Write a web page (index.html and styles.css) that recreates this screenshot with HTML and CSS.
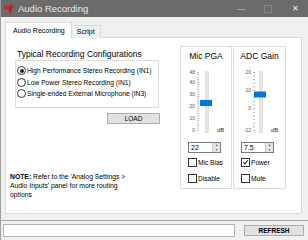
FILE: index.html
```html
<!DOCTYPE html>
<html lang="en">
<head>
    <meta charset="UTF-8">
    <link rel="stylesheet" href="styles.css">
    <title>Audio Recording</title>
</head>
<body>
    <div class="window">
        <div class="titlebar">
            <svg class="logo" width="10" height="10" viewBox="0 0 10 10">
                <path d="M0 2 L3 1 L4 3 L5 2 L6 0 L8 1 L10 3 L8 4 L8 7 L6 10 L5 9 L5 6 L3 5 L1 5 Z" fill="#c8202a"/>
            </svg>
            <span class="title">Audio Recording</span>
            <div class="controls">
                <span class="ctl min">&#8212;</span>
                <span class="ctl max"></span>
                <span class="ctl close">&#10005;</span>
            </div>
        </div>

        <div class="content">
            <div class="tabs">
                <div class="tab active">Audio Recording</div>
                <div class="tab">Script</div>
            </div>
            <div class="panel">
                <div class="left-col">
                    <div class="section-title">Typical Recording Configurations</div>
                    <div class="config-list">
                        <label class="radio-row"><span class="radio checked"></span>High Performance Stereo Recording (IN1)</label>
                        <label class="radio-row"><span class="radio"></span>Low Power Stereo Recording (IN1)</label>
                        <label class="radio-row"><span class="radio"></span>Single-ended External Microphone (IN3)</label>
                    </div>
                    <button class="btn load-btn">LOAD</button>
                    <p class="note"><strong>NOTE:</strong> Refer to the 'Analog Settings &gt; Audio Inputs' panel for more routing options</p>
                </div>

                <div class="gain-groups">
                    <div class="group">
                        <div class="group-title">Mic PGA</div>
                        <svg class="slider" width="52" height="70" viewBox="0 0 52 70">
                            <g class="minor" id="pga-ticks"></g>
                            <g class="scale">
                                <text x="15" y="8">48</text>
                                <text x="15" y="17.5">40</text>
                                <text x="15" y="29.5">30</text>
                                <text x="15" y="41.5">20</text>
                                <text x="15" y="54">10</text>
                                <text x="15" y="66">0</text>
                            </g>
                            <rect class="track" x="25.5" y="5.5" width="3" height="61"/>
                            <rect class="thumb" x="20" y="34" width="12" height="6"/>
                            <text class="unit" x="37" y="66">dB</text>
                        </svg>
                        <div class="spin"><span class="spin-val">22</span><span class="spin-btns"><i>&#9650;</i><i>&#9660;</i></span></div>
                        <label class="check-row"><span class="check"></span>Mic Bias</label>
                        <label class="check-row"><span class="check"></span>Disable</label>
                    </div>
                    <div class="group">
                        <div class="group-title">ADC Gain</div>
                        <svg class="slider" width="53" height="70" viewBox="0 0 53 70">
                            <g class="minor" id="adc-ticks"></g>
                            <g class="scale">
                                <text x="18" y="8">20</text>
                                <text x="18" y="26">10</text>
                                <text x="18" y="44">0</text>
                                <text x="18" y="66">-12</text>
                            </g>
                            <rect class="track" x="26.5" y="5.5" width="3" height="61"/>
                            <rect class="thumb" x="21" y="25.5" width="12" height="6"/>
                            <text class="unit" x="38" y="66">dB</text>
                        </svg>
                        <div class="spin"><span class="spin-val">7.5</span><span class="spin-btns"><i>&#9650;</i><i>&#9660;</i></span></div>
                        <label class="check-row"><span class="check checked"></span>Power</label>
                        <label class="check-row"><span class="check"></span>Mute</label>
                    </div>
                </div>
            </div>
        </div>

        <div class="footer">
            <div class="status-box"></div>
            <button class="btn refresh-btn">REFRESH</button>
        </div>
    </div>

    <script>
        // minor tick dots next to the slider scales
        function drawTicks(id, x, count) {
            const g = document.getElementById(id);
            const step = 58 / count;
            for (let i = 0; i <= count; i++) {
                const r = document.createElementNS('http://www.w3.org/2000/svg', 'rect');
                r.setAttribute('x', x);
                r.setAttribute('y', (6 + i * step).toFixed(1));
                r.setAttribute('width', 2);
                r.setAttribute('height', 0.8);
                g.appendChild(r);
            }
        }
        drawTicks('pga-ticks', 17, 24);
        drawTicks('adc-ticks', 20, 16);
    </script>
</body>
</html>
```

FILE: styles.css
```css
body {
    margin: 0;
    font-family: "Liberation Sans", Arial, sans-serif;
    color: #000;
}

.window {
    width: 308px;
    height: 240px;
    background: #f0f0f0;
    display: flex;
    flex-direction: column;
    box-sizing: border-box;
    border-left: 1px solid #a0a0a0;
    overflow: hidden;
}

/* title bar */
.titlebar {
    height: 17px;
    flex: none;
    background: #6b6b6b;
    display: flex;
    align-items: center;
    margin-left: -1px;
}
.logo {
    margin-left: 4px;
    margin-right: 4px;
}
.title {
    color: #e8e8e8;
    font-size: 9.5px;
}
.controls {
    margin-left: auto;
    display: flex;
    align-items: center;
}
.ctl {
    width: 26px;
    text-align: center;
    color: #d8d8d8;
    font-size: 8px;
}
.ctl.max {
    width: 6px;
    height: 6px;
    margin: 0 10px;
    border: 1px solid #858585;
}
.ctl.close {
    font-size: 8px;
    color: #f0f0f0;
}

/* tabs + panel */
.content {
    padding: 5px 6px 0 4px;
}
.tabs {
    display: flex;
    align-items: flex-end;
    height: 15px;
}
.tab {
    font-size: 7px;
    height: 12px;
    line-height: 12px;
    padding: 0 5px;
    background: #f0f0f0;
    border: 1px solid #d9d9d9;
    border-bottom: none;
    border-left: none;
    margin-bottom: -1px;
}
.tab.active {
    height: 15px;
    line-height: 15px;
    background: #fff;
    border-left: 1px solid #d9d9d9;
    position: relative;
    z-index: 1;
    padding: 0 6px 0 7px;
}
.panel {
    height: 175px;
    background: #fff;
    border: 1px solid #d9d9d9;
    display: flex;
}

.left-col {
    flex: 1;
    display: flex;
    flex-direction: column;
    padding-left: 4px;
}
.section-title {
    font-size: 8.5px;
    margin: 11px 0 0 7px;
    line-height: 11px;
}
.config-list {
    margin: 0 0 0 5px;
    width: 144px;
    height: 48px;
    box-sizing: border-box;
    border: 1px solid #dcdcdc;
    padding-top: 4px;
}
.radio-row {
    display: flex;
    align-items: center;
    font-size: 6.7px;
    height: 11.5px;
    white-space: nowrap;
}
.radio {
    width: 7px;
    height: 7px;
    border: 1px solid #333;
    border-radius: 50%;
    margin: 0 1px 0 1px;
    display: flex;
    align-items: center;
    justify-content: center;
    flex: none;
}
.radio.checked::after {
    content: "";
    width: 4px;
    height: 4px;
    border-radius: 50%;
    background: #222;
}

.btn {
    font-family: inherit;
    font-size: 6.5px;
    background: #e1e1e1;
    border: 1px solid #adadad;
    padding: 0;
    color: #000;
}
.load-btn {
    width: 53px;
    height: 11px;
    margin: 5px 0 0 97px;
}
.note {
    font-size: 6.8px;
    line-height: 9px;
    width: 122px;
    margin: 48px 0 0 0;
}

.gain-groups {
    display: flex;
    gap: 1px;
    margin: 8px 15px 0 0;
}
.group {
    width: 52px;
    height: 143px;
    box-sizing: border-box;
    border: 1px solid #dcdcdc;
    display: flex;
    flex-direction: column;
}
.group + .group {
    width: 53px;
}
.group-title {
    font-size: 8.5px;
    text-align: center;
    line-height: 10px;
    padding-top: 4px;
    margin-bottom: 5px;
}
.slider {
    display: block;
    margin-left: -1px;
}
.slider .scale text {
    font-size: 5px;
    fill: #555;
    text-anchor: end;
}
.slider .minor rect {
    fill: #9aa6b2;
}
.slider .track {
    fill: #e7e7e7;
    stroke: #d4d4d4;
    stroke-width: 0.6;
}
.slider .thumb {
    fill: #0078d7;
}
.slider .unit {
    font-size: 6px;
    fill: #333;
}

.spin {
    margin: 6px 0 0 7px;
    width: 33px;
    height: 11px;
    box-sizing: border-box;
    border: 1px solid #7a7a7a;
    display: flex;
    align-items: center;
    font-size: 7px;
}
.spin-val {
    flex: 1;
    padding-left: 2px;
}
.spin-btns {
    width: 7px;
    height: 9px;
    display: flex;
    flex-direction: column;
    background: #e5e5e5;
    border-left: 1px solid #c8c8c8;
}
.spin-btns i {
    font-style: normal;
    font-size: 3px;
    height: 4.5px;
    line-height: 4.5px;
    text-align: center;
    color: #444;
}

.check-row {
    display: flex;
    align-items: center;
    font-size: 6.6px;
    height: 9px;
    margin: 5px 0 0 7px;
    white-space: nowrap;
}
.check-row + .check-row {
    margin-top: 7px;
}
.check {
    width: 7px;
    height: 7px;
    border: 1px solid #333;
    margin-right: 1px;
    flex: none;
    position: relative;
}
.check.checked::after {
    content: "";
    position: absolute;
    left: 2px;
    top: 0;
    width: 2px;
    height: 4px;
    border: solid #222;
    border-width: 0 1px 1px 0;
    transform: rotate(40deg);
}

/* bottom bar */
.footer {
    margin-top: 6px;
    border-top: 1px solid #a8a8a8;
    display: flex;
    align-items: center;
    padding: 3px 4px 0 2px;
}
.status-box {
    width: 232px;
    height: 13px;
    box-sizing: border-box;
    background: #fff;
    border: 1px solid #b4b4b4;
}
.refresh-btn {
    margin-left: 9px;
    width: 60px;
    height: 11px;
    font-weight: bold;
}
```
